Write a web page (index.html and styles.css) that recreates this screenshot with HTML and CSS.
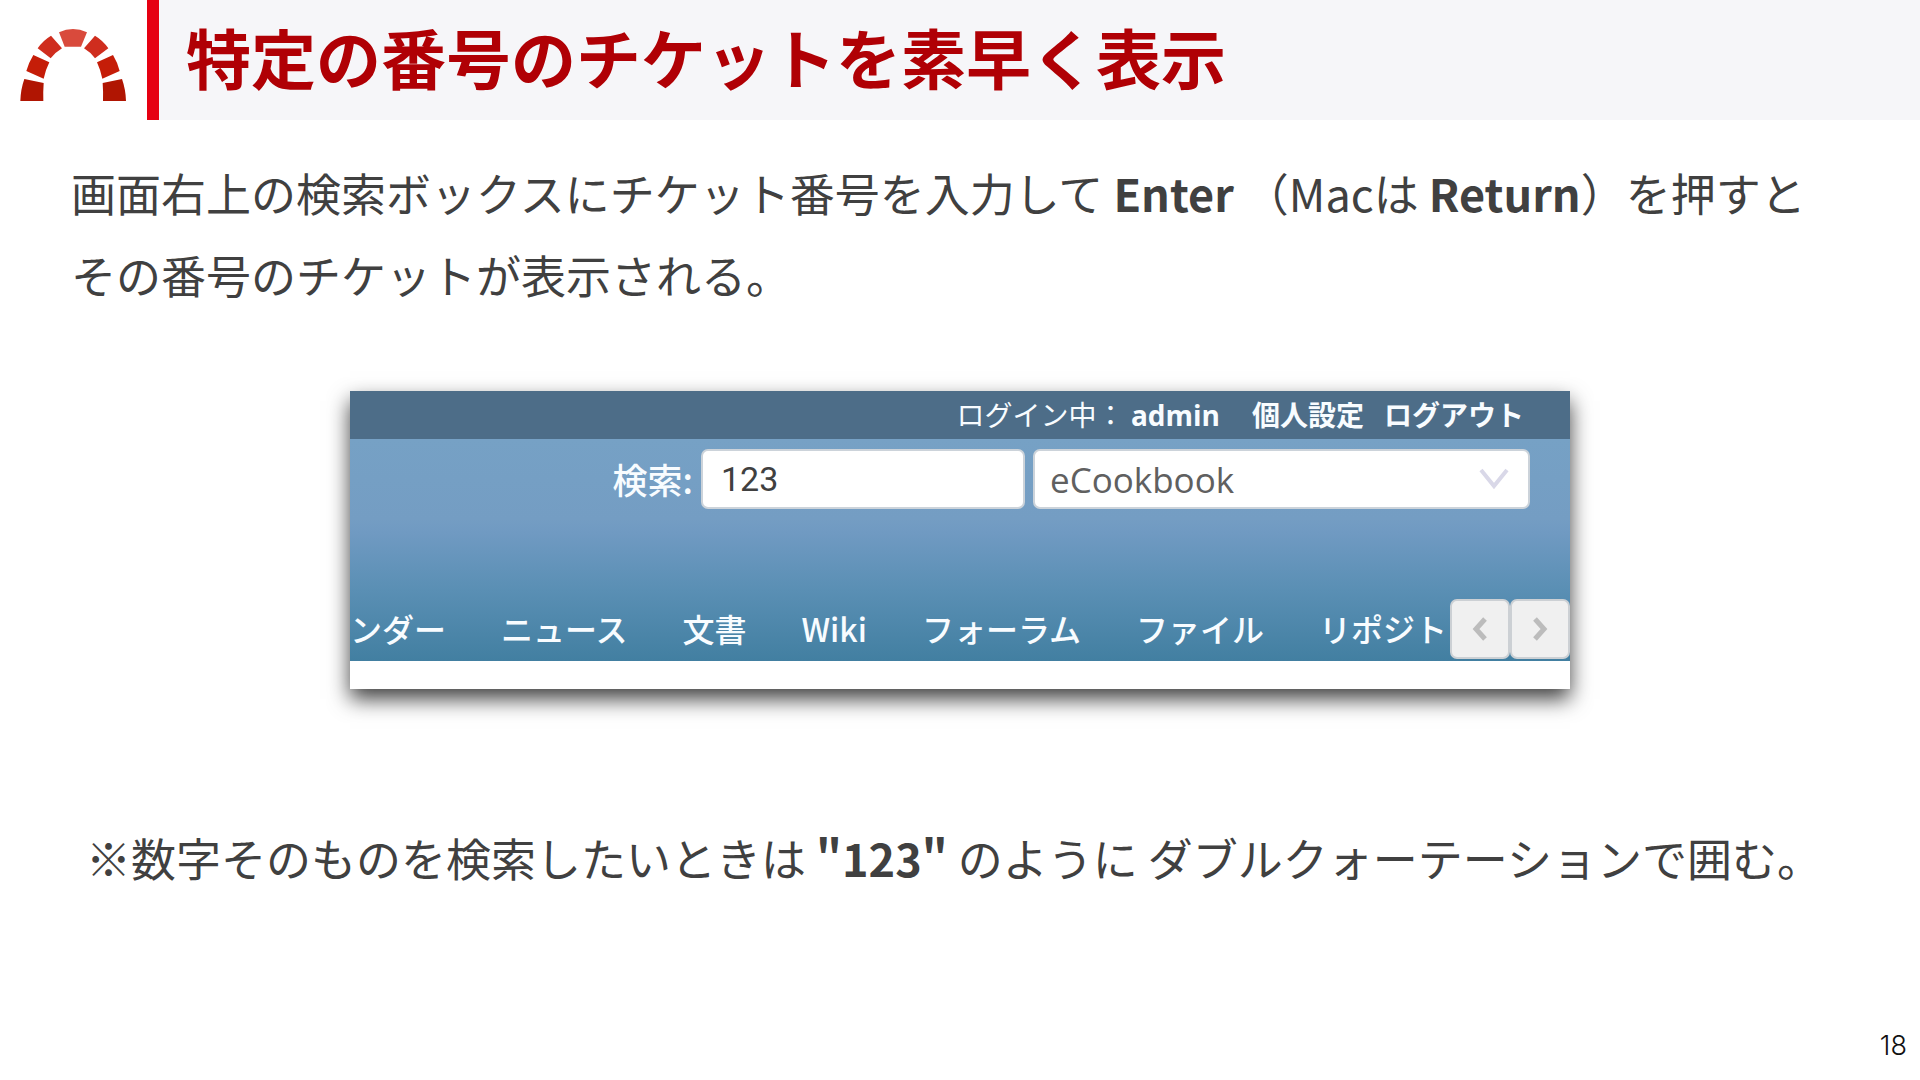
FILE: index.html
```html
<!DOCTYPE html>
<html lang="ja">
<head>
    <meta charset="UTF-8">
    <meta name="viewport" content="width=device-width, initial-scale=1.0">
    <title>特定の番号のチケットを素早く表示</title>
    <link rel="stylesheet" href="styles.css">
</head>
<body>
    <header class="slide-header">
        <svg class="logo" viewBox="0 0 441 360" aria-hidden="true">
            <path fill="#d94a3c" d="M177 97Q219 77 261 97L243 140H194Z"/>
            <path fill="#cf2d1e" d="M153 107L186 145Q166 157 152 175L113 145Q128 122 153 107Z"/>
            <path fill="#cf2d1e" d="M285 107L252 145Q272 157 285 175L325 145Q310 122 285 107Z"/>
            <path fill="#c51d08" d="M100 165L148 187Q136 211 131 236L79 213Q86 188 100 165Z"/>
            <path fill="#c51d08" d="M339 165L291 187Q302 211 307 236L359 213Q353 188 339 165Z"/>
            <path fill="#b01502" d="M73 237L131 249Q129 276 130 303H61Q62 268 73 237Z"/>
            <path fill="#b01502" d="M366 237L308 249Q310 276 309 303H378Q377 268 366 237Z"/>
        </svg>
        <h1>特定の番号のチケットを素早く表示</h1>
    </header>
    <main>
        <p class="lead">画面右上の検索ボックスにチケット番号を入力して <strong>Enter</strong> （Macは <strong>Return</strong>）を押すと<br>その番号のチケットが表示される。</p>
        <div class="app">
            <div class="top-menu">
                <span>ログイン中： <a class="user" href="#">admin</a></span>
                <a href="#">個人設定</a>
                <a href="#">ログアウト</a>
            </div>
            <div class="app-header">
                <form class="search">
                    <label for="q">検索:</label>
                    <input type="text" id="q" name="q" value="123">
                    <div class="project">
                        <select id="project" name="project" aria-label="プロジェクト">
                            <option>eCookbook</option>
                        </select>
                        <svg class="chevron" viewBox="0 0 30 22" aria-hidden="true">
                            <path d="M2 2L15 18L28 2"/>
                        </svg>
                    </div>
                </form>
                <div class="menu-row">
                    <nav class="main-menu">
                        <a href="#">ンダー</a>
                        <a href="#">ニュース</a>
                        <a href="#">文書</a>
                        <a href="#">Wiki</a>
                        <a href="#">フォーラム</a>
                        <a href="#">ファイル</a>
                        <a href="#">リポジト</a>
                    </nav>
                    <button type="button" aria-label="前へ"><svg viewBox="0 0 16 24"><path d="M13 2L4 12L13 22"/></svg></button>
                    <button type="button" aria-label="次へ"><svg viewBox="0 0 16 24"><path d="M3 2L12 12L3 22"/></svg></button>
                </div>
            </div>
        </div>
        <p class="note">※数字そのものを検索したいときは <strong>"123"</strong> のように ダブルクォーテーションで囲む。</p>
    </main>
    <footer>18</footer>
</body>
</html>
```
FILE: styles.css
```css
* {
    box-sizing: border-box;
}
body {
    margin: 0;
    min-height: 100vh;
    display: flex;
    flex-direction: column;
    background: #fff;
    color: #404040;
    font-family: "Noto Sans CJK JP", sans-serif;
    font-size: 45px;
}
.slide-header {
    display: flex;
    height: 120px;
}
.logo {
    width: 147px;
    height: 120px;
}
h1 {
    flex: 1;
    margin: 0;
    padding: 0 0 8px 27px;
    border-left: 12px solid #e60012;
    background: #f6f6f9;
    color: #b00005;
    font-size: 65px;
    line-height: 112px;
}
main {
    flex: 1;
}
p {
    margin: 0;
    line-height: 82px;
}
.lead {
    padding: 32px 71px 0;
}
.note {
    padding: 0 86px;
}
.app {
    width: calc(100% - 700px);
    min-width: 1220px;
    margin: 75px auto 128px;
    padding-bottom: 28px;
    background: #fff;
    box-shadow: 0 10px 20px rgba(0, 0, 0, 0.75);
}
.app a {
    color: #f8fcff;
    text-decoration: none;
}
.top-menu {
    display: flex;
    justify-content: flex-end;
    gap: 20px;
    height: 48px;
    padding-right: 46px;
    background: #4d6d88;
    color: #f8fcff;
    font-size: 28px;
    line-height: 46px;
}
.top-menu a {
    font-weight: bold;
}
.top-menu .user {
    margin-right: 12px;
    font-family: "Open Sans", sans-serif;
}
.app-header {
    display: flex;
    flex-direction: column;
    justify-content: space-between;
    height: 222px;
    padding: 10px 0 2px;
    background: linear-gradient(#76a1c5, #749dc3 36%, #709ac2 42%, #5a8fb4 68%, #427fa1);
}
.search {
    display: flex;
    justify-content: flex-end;
    align-items: center;
    gap: 8px;
    height: 60px;
    padding-right: 40px;
    color: #f8fcff;
    font-size: 35px;
    font-weight: 500;
    line-height: 56px;
}
.search input,
.search select {
    height: 60px;
    border: 2px solid #ccd3da;
    border-radius: 7px;
    background: #fff;
}
.search input {
    width: 324px;
    padding: 0 18px;
    color: #404040;
    font-family: Roboto, sans-serif;
    font-size: 34px;
}
.project {
    position: relative;
    display: flex;
}
.search select {
    width: 497px;
    padding: 0 15px;
    appearance: none;
    color: #606060;
    font-family: "Open Sans", sans-serif;
    font-size: 35px;
}
.chevron {
    position: absolute;
    top: 19px;
    right: 21px;
    width: 30px;
    height: 22px;
    fill: none;
    stroke: #d9d8e8;
    stroke-width: 4;
    pointer-events: none;
}
.menu-row {
    display: flex;
}
.main-menu {
    display: flex;
    flex: 1;
    gap: 55px;
    min-width: 0;
    font-size: 32px;
    font-weight: 500;
    line-height: 58px;
    white-space: nowrap;
}
.menu-row button {
    display: flex;
    justify-content: center;
    align-items: center;
    width: 60px;
    height: 60px;
    padding: 0;
    border: 2px solid #ccd0d4;
    border-radius: 7px;
    background: #f0f0f0;
}
.menu-row button svg {
    width: 16px;
    height: 24px;
    fill: none;
    stroke: #bcbcbc;
    stroke-width: 5;
}
footer {
    padding: 0 13px 14px;
    color: #111;
    font-family: Inter, sans-serif;
    font-size: 27px;
    font-weight: 300;
    line-height: 40px;
    text-align: right;
}
```
